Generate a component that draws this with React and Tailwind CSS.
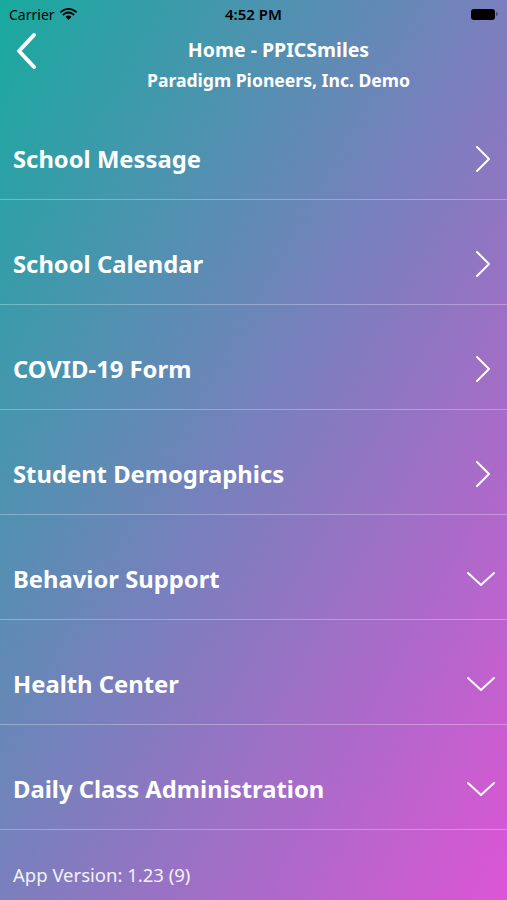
const rows = [
  { label: "School Message", open: false },
  { label: "School Calendar", open: false },
  { label: "COVID-19 Form", open: false },
  { label: "Student Demographics", open: false },
  { label: "Behavior Support", open: true },
  { label: "Health Center", open: true },
  { label: "Daily Class Administration", open: true },
];

const StatusBar = () => (
  <div className="relative flex h-[28px] items-center justify-between px-[9px] text-black">
    <div className="flex items-center gap-[5px] text-[14px]">
      <span>Carrier</span>
      <svg width="17" height="12" viewBox="0 0 17 12">
        <path d="M8.5 12 L5.6 8.8 A4.2 4.2 0 0 1 11.4 8.8 Z" fill="#000" />
        <path d="M3.4 6.6 A7.3 7.3 0 0 1 13.6 6.6" stroke="#000" strokeWidth="1.8" fill="none" strokeLinecap="round" />
        <path d="M1 3.9 A10.8 10.8 0 0 1 16 3.9" stroke="#000" strokeWidth="1.8" fill="none" strokeLinecap="round" />
      </svg>
    </div>
    <span className="absolute left-1/2 -translate-x-1/2 text-[15px] font-semibold">4:52 PM</span>
    <div className="flex items-center">
      <div className="h-[11px] w-[24px] rounded-[3px] bg-black" />
      <div className="ml-[1px] h-[4px] w-[2px] rounded-r bg-black/40" />
    </div>
  </div>
);

const Arrow = ({ open }) =>
  open ? (
    <svg width="30" height="18" viewBox="0 0 30 18" className="-mr-[1px]">
      <path d="M2 3 L15 15 L28 3" stroke="#fff" strokeWidth="2" fill="none" strokeLinecap="round" strokeLinejoin="round" />
    </svg>
  ) : (
    <svg width="18" height="28" viewBox="0 0 18 28" className="mr-[3px]">
      <path d="M3 2 L15 14 L3 26" stroke="#fff" strokeWidth="2" fill="none" strokeLinecap="round" strokeLinejoin="round" />
    </svg>
  );

export default function App() {
  return (
    <div
      className="flex min-h-[900px] w-full flex-col bg-[linear-gradient(to_bottom_right,#18aa9f,#7a7fbd_50%,#dd55d5)] text-white"
      style={{ fontFamily: '"Noto Sans", sans-serif' }}
    >
      <StatusBar />
      <div className="relative flex h-[67px] flex-col items-center">
        <svg className="absolute left-[13px] top-[4px]" width="26" height="38" viewBox="0 0 26 38">
          <path d="M21 3 L6 19 L21 35" stroke="#fff" strokeWidth="4" fill="none" strokeLinecap="round" strokeLinejoin="round" />
        </svg>
        <div className="ml-[50px] mt-[8px] text-[19.5px] font-bold leading-[27px]">Home - PPICSmiles</div>
        <div className="ml-[50px] mt-[5px] text-[17.6px] font-bold leading-[24px]">Paradigm Pioneers, Inc. Demo</div>
      </div>
      {rows.map((r) => (
        <div key={r.label} className="flex h-[105px] items-start border-b border-white/30 pl-[13px] pr-[12px]">
          <div className="mt-[47px] flex h-[34px] w-full items-center justify-between">
            <span className="text-[23.8px] font-bold leading-[34px]">{r.label}</span>
            <Arrow open={r.open} />
          </div>
        </div>
      ))}
      <div className="pl-[13px] pt-[31px] text-[18.5px] text-white/90">App Version: 1.23 (9)</div>
    </div>
  );
}
